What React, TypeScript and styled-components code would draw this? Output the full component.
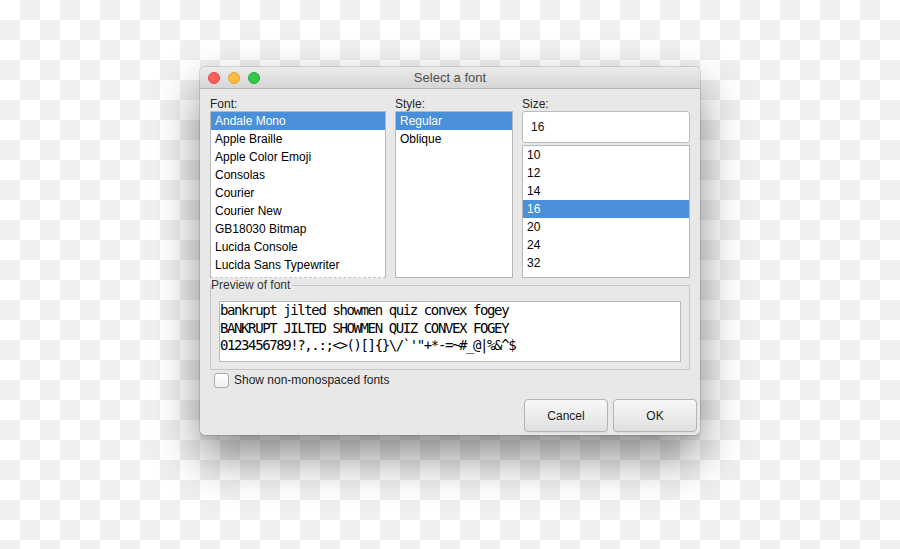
import * as React from "react";
import styled, { createGlobalStyle } from "styled-components";

const FONTS = [
  "Andale Mono",
  "Apple Braille",
  "Apple Color Emoji",
  "Consolas",
  "Courier",
  "Courier New",
  "GB18030 Bitmap",
  "Lucida Console",
  "Lucida Sans Typewriter",
];
const STYLES = ["Regular", "Oblique"];
const SIZES = [10, 12, 14, 16, 20, 24, 32];

const PREVIEW = [
  "bankrupt jilted showmen quiz convex fogey",
  "BANKRUPT JILTED SHOWMEN QUIZ CONVEX FOGEY",
  "0123456789!?,.:;<>()[]{}\\/`'\"+*-=~#_@|%&^$",
];

const GlobalStyle = createGlobalStyle`
  html, body {
    margin: 0;
    padding: 0;
  }
  body {
    font-family: "Liberation Sans", Arial, sans-serif;
    background: repeating-conic-gradient(#efefef 0 25%, #ffffff 0 50%) 0 0 / 40px 40px;
  }
`;

const App = () => {
  const [font, setFont] = React.useState(FONTS[0]);
  const [style, setStyle] = React.useState(STYLES[0]);
  const [size, setSize] = React.useState(16);
  const [showAll, setShowAll] = React.useState(false);

  return (
    <>
      <GlobalStyle />
      <Page>
        <Window>
          <TitleBar>
            <Lights>
              <Light $color="#fc605b" $edge="#de4a45" />
              <Light $color="#fdbc40" $edge="#dea236" />
              <Light $color="#34c84a" $edge="#27aa35" />
            </Lights>
            <Title>Select a font</Title>
            <span />
          </TitleBar>

          <Body>
            <Columns>
              <Column>
                <Label>Font:</Label>
                <ListBox $height={167} $dashedBottom>
                  {FONTS.map((f) => (
                    <Row key={f} $selected={f === font} onClick={() => setFont(f)}>
                      {f}
                    </Row>
                  ))}
                </ListBox>
              </Column>
              <Column>
                <Label>Style:</Label>
                <ListBox $height={167}>
                  {STYLES.map((st) => (
                    <Row key={st} $selected={st === style} onClick={() => setStyle(st)}>
                      {st}
                    </Row>
                  ))}
                </ListBox>
              </Column>
              <Column>
                <Label>Size:</Label>
                <SizeInput
                  value={String(size)}
                  onChange={(e) => setSize(Number(e.target.value) || 0)}
                />
                <ListBox $height={133}>
                  {SIZES.map((n) => (
                    <Row key={n} $selected={n === size} onClick={() => setSize(n)}>
                      {n}
                    </Row>
                  ))}
                </ListBox>
              </Column>
            </Columns>

            <Group>
              <Legend>Preview of font</Legend>
              <Preview>
                {PREVIEW.map((line) => (
                  <PreviewLine key={line}>{line}</PreviewLine>
                ))}
              </Preview>
            </Group>

            <CheckRow onClick={() => setShowAll(!showAll)}>
              <CheckBox $checked={showAll}>{showAll ? "✓" : ""}</CheckBox>
              <CheckLabel>Show non-monospaced fonts</CheckLabel>
            </CheckRow>

            <Buttons>
              <Button type="button">Cancel</Button>
              <Button type="button">OK</Button>
            </Buttons>
          </Body>
        </Window>
      </Page>
    </>
  );
};

const Page = styled.div`
  display: flex;
  justify-content: center;
  align-items: flex-start;
  height: 549px;
  padding-top: 67px;
  box-sizing: border-box;
`;

const Window = styled.div`
  width: 500px;
  background: #e8e8e8;
  border-radius: 5px;
  overflow: hidden;
  box-shadow: 0 22px 45px rgba(0, 0, 0, 0.45), 0 0 0 1px rgba(0, 0, 0, 0.12);
`;

const TitleBar = styled.div`
  height: 22px;
  box-sizing: border-box;
  display: grid;
  grid-template-columns: 1fr auto 1fr;
  align-items: center;
  padding: 0 8px;
  background: linear-gradient(#ebebeb, #d6d6d6);
  border-bottom: 1px solid #b4b4b4;
`;

const Lights = styled.div`
  display: flex;
  gap: 8px;
`;

const Light = styled.span<{ $color: string; $edge: string }>`
  width: 12px;
  height: 12px;
  box-sizing: border-box;
  border-radius: 50%;
  background: ${(p) => p.$color};
  border: 0.5px solid ${(p) => p.$edge};
`;

const Title = styled.div`
  font-size: 13px;
  color: #4d4d4d;
  line-height: 16px;
`;

const Body = styled.div`
  display: flex;
  flex-direction: column;
  padding: 8px 3px 3px 10px;
`;

const Columns = styled.div`
  display: grid;
  grid-template-columns: 176px 118px 168px;
  column-gap: 9px;
  width: 480px;
`;

const Column = styled.div`
  display: flex;
  flex-direction: column;
`;

const Label = styled.div`
  font-size: 12px;
  line-height: 14px;
  height: 14px;
  color: #262626;
`;

const ListBox = styled.div<{ $height: number; $dashedBottom?: boolean }>`
  height: ${(p) => p.$height}px;
  box-sizing: border-box;
  background: #fff;
  border: 1px solid #b8b8b8;
  border-bottom: 1px ${(p) => (p.$dashedBottom ? "dashed #c4c4c4" : "solid #b8b8b8")};
  overflow: hidden;
`;

const Row = styled.div<{ $selected: boolean }>`
  height: 18px;
  line-height: 18px;
  padding-left: 4px;
  font-size: 12px;
  white-space: nowrap;
  cursor: default;
  color: ${(p) => (p.$selected ? "#fff" : "#000")};
  background: ${(p) => (p.$selected ? "#4a8fd9" : "transparent")};
`;

const SizeInput = styled.input`
  height: 32px;
  box-sizing: border-box;
  margin: 0 0 2px;
  padding: 0 8px;
  border: 1px solid #bcbcbc;
  border-radius: 3px;
  background: #fff;
  font-family: "Liberation Sans", Arial, sans-serif;
  font-size: 12px;
  color: #111;
  outline: none;
`;

const Group = styled.fieldset`
  width: 480px;
  box-sizing: border-box;
  margin: 0;
  padding: 9px 8px 7px 8px;
  border: 1px solid #c6c6c6;
  min-width: 0;
`;

const Legend = styled.legend`
  padding: 0 2px 0 0;
  margin-left: -8px;
  font-size: 12px;
  line-height: 14px;
  color: #333;
`;

const Preview = styled.div`
  height: 61px;
  box-sizing: border-box;
  background: #fff;
  border: 1px solid #bababa;
  padding: 0;
  overflow: hidden;
`;

const PreviewLine = styled.div`
  font-family: "DejaVu Sans Mono", "Liberation Mono", monospace;
  font-size: 14px;
  letter-spacing: -1.4px;
  line-height: 17.5px;
  color: #000;
  white-space: pre;
`;

const CheckRow = styled.div`
  display: flex;
  align-items: center;
  gap: 5px;
  margin-top: 3px;
  padding-left: 4px;
  height: 15px;
  cursor: default;
`;

const CheckBox = styled.span<{ $checked: boolean }>`
  width: 15px;
  height: 15px;
  box-sizing: border-box;
  border: 1px solid #a9a9a9;
  border-radius: 3px;
  background: linear-gradient(#ffffff, #f1f1f1);
  font-size: 11px;
  line-height: 13px;
  text-align: center;
  color: ${(p) => (p.$checked ? "#222" : "transparent")};
`;

const CheckLabel = styled.span`
  font-size: 12px;
  line-height: 15px;
  color: #222;
`;

const Buttons = styled.div`
  display: flex;
  justify-content: flex-end;
  gap: 5px;
  margin-top: 11px;
`;

const Button = styled.button`
  width: 84px;
  height: 33px;
  box-sizing: border-box;
  margin: 0;
  border: 1px solid #b3b3b3;
  border-radius: 4px;
  background: linear-gradient(#f8f8f8, #e0e0e0);
  font-family: "Liberation Sans", Arial, sans-serif;
  font-size: 12px;
  color: #1c1c1c;
  box-shadow: 0 1px 0 rgba(0, 0, 0, 0.05);
`;

export default App;
